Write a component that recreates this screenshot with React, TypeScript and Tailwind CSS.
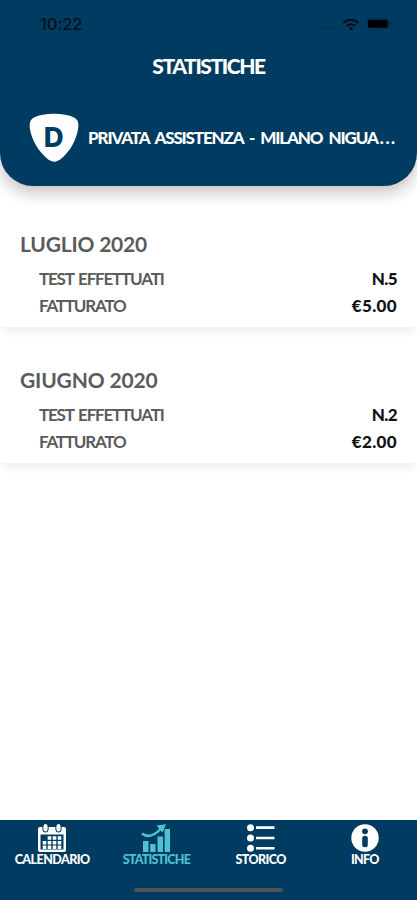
import type { ReactNode } from "react";

const months = [
  {
    label: "LUGLIO 2020",
    labelClass: "tracking-[-0.2px]",
    tests: "N.5",
    testsClass: "tracking-[-0.6px]",
    revenue: "€5.00",
  },
  {
    label: "GIUGNO 2020",
    labelClass: "tracking-[-0.15px]",
    tests: "N.2",
    testsClass: "tracking-[-0.6px]",
    revenue: "€2.00",
  },
];

function StatusBar() {
  return (
    <div className="flex h-12 items-center justify-between pr-[25px] pl-10 text-[#031019]">
      <span className="font-['Inter',sans-serif] text-[16.5px] leading-none font-medium tracking-[-0.1px]">
        10:22
      </span>
      <div className="flex items-center">
        <span className="mt-2 mr-[6px] h-px w-5 bg-[#00304f]" />
        <svg width="18" height="13" viewBox="0 0 18 13" fill="none" stroke="currentColor">
          <path d="M1.5 5a10.6 10.6 0 0 1 15 0" strokeWidth="2.4" />
          <path d="M4.5 8a6.4 6.4 0 0 1 9 0" strokeWidth="2" />
          <path d="M9 12.5 6.8 10.2a3.2 3.2 0 0 1 4.4 0Z" fill="currentColor" stroke="none" />
        </svg>
        <svg className="ml-1.5" width="26" height="12" viewBox="0 0 26 12" fill="none">
          <rect x="0.8" y="0.5" width="22" height="10.5" rx="3" stroke="#00314f" />
          <rect x="2" y="1.8" width="19.6" height="8" rx="1.5" fill="#000" />
          <path d="M24 4v4" stroke="#00263f" strokeWidth="1.2" />
        </svg>
      </div>
    </div>
  );
}

function Shield() {
  return (
    <svg className="shrink-0" width="50" height="50" viewBox="0 0 50 50">
      <path
        d="M25 .8C33 .8 40 2 45 4.6C48.8 6.6 49.8 10 49.2 15C47.6 27 41 38.5 31.500 46.300C27 49.600 23.500 49.600 19 46.300C9.500 38.500 2.400 27 .8 15C.200 10 1.400 6.600 5 4.600C10 2 17 .8 25 .8Z"
        fill="#fff"
      />
      <text
        x="14.8"
        y="34"
        className="fill-[#003c61] font-['Inter',sans-serif] text-[27.5px] font-extrabold"
      >
        D
      </text>
    </svg>
  );
}

function Row({ label, value, valueClass }: { label: string; value: string; valueClass?: string }) {
  return (
    <div className="flex h-[27px] items-center justify-between pr-5 pl-[39px] text-[17px] font-bold">
      <span className="tracking-[-1.2px] [word-spacing:2px]">{label}</span>
      <span className={`font-black text-[#111] ${valueClass ?? "tracking-[0.35px]"}`}>{value}</span>
    </div>
  );
}

function CalendarIcon() {
  return (
    <svg width="28" height="28" viewBox="0 0 28 28">
      <path
        fillRule="evenodd"
        d="M0 5a2 2 0 0 1 2-2h24a2 2 0 0 1 2 2v21a2 2 0 0 1-2 2H2a2 2 0 0 1-2-2ZM2.500 10.500v15h23v-15Z"
        fill="#fff"
      />
      <ellipse cx="7.500" cy="4" rx="3.2" ry="4.600" fill="#003c61" />
      <ellipse cx="20.500" cy="4" rx="3.2" ry="4.600" fill="#003c61" />
      <ellipse cx="7.500" cy="3.800" rx="2.2" ry="3.800" fill="#fff" />
      <ellipse cx="20.500" cy="3.800" rx="2.2" ry="3.800" fill="#fff" />
      <g stroke="#fff" strokeWidth="3.400" strokeDasharray="3.600 1.400">
        <path d="M9.700 14H23.300M4.700 18.8H23.300M4.700 23.3H23.300" />
      </g>
    </svg>
  );
}

function ChartIcon() {
  return (
    <svg width="30" height="28" viewBox="0 0 30 28" fill="#50c1ce">
      <path d="M2 17h5.500v11H2zM9.200 20h5.300v8H9.200zM16.500 12.500H22V28h-5.500zM23.600 5H29v23h-5.400z" />
      <path d="M.800 9.500C8 15 14.500 10.500 20 4.500" fill="none" stroke="#50c1ce" strokeWidth="2.500" />
      <path d="m15.500 1.500 9.500-1.200-3.500 8.500Z" />
    </svg>
  );
}

function ListIcon() {
  return (
    <svg width="28" height="28" viewBox="0 0 28 28" fill="#fff">
      <circle cx="3.500" cy="3.700" r="3.500" />
      <circle cx="3.500" cy="14" r="3.500" />
      <circle cx="3.500" cy="24.300" r="3.500" />
      <path d="M9 2.300h18.500v2.600H9zM9 12.700h18.500v2.600H9zM9 23h18.500v2.600H9z" />
    </svg>
  );
}

function InfoIcon() {
  return (
    <svg width="28" height="28" viewBox="0 0 28 28">
      <circle cx="14" cy="14" r="13.700" fill="#fff" />
      <circle cx="14" cy="7.300" r="2.900" fill="#003c61" />
      <rect x="11.200" y="11.700" width="5.600" height="11.500" rx="2.500" fill="#003c61" />
    </svg>
  );
}

function Tab({ icon, className, children }: { icon: ReactNode; className: string; children: string }) {
  return (
    <div className={`flex flex-1 flex-col items-center text-[12.5px] leading-3 font-black ${className}`}>
      {icon}
      <span className="mt-0.5 whitespace-nowrap">{children}</span>
    </div>
  );
}

export default function App() {
  return (
    <div className="flex h-[900px] w-full flex-col overflow-hidden bg-white font-['Lato',sans-serif] text-[#5b5b5b]">
      <header className="relative h-[185.500px] shrink-0 rounded-b-[33px] bg-[#003c61] text-white shadow-[0_7px_15px_rgba(40,20,20,0.25)]">
        <StatusBar />
        <h1 className="flex h-9 items-center justify-center text-[21px] font-black tracking-[-1.4px]">
          STATISTICHE
        </h1>
        <div className="mt-[29px] flex items-center gap-[9px] pl-[29px]">
          <Shield />
          <p className="text-[17px] font-black tracking-[-1.15px] whitespace-nowrap [word-spacing:3.2px]">
            PRIVATA ASSISTENZA - MILANO NIGUA<span className="ml-0.5 tracking-[1.6px]">...</span>
          </p>
        </div>
      </header>

      <main className="flex flex-1 flex-col gap-5 pt-[25.500px]">
        {months.map((month) => (
          <section
            key={month.label}
            className="h-[116px] bg-white pt-[17px] shadow-[0_7px_8px_-3px_rgba(0,0,0,0.08)]"
          >
            <h2 className={`flex h-8 items-center pl-5 text-[21px] font-bold ${month.labelClass}`}>
              {month.label}
            </h2>
            <div className="pt-[5px]">
              <Row label="TEST EFFETTUATI" value={month.tests} valueClass={month.testsClass} />
              <Row label="FATTURATO" value={month.revenue} />
            </div>
          </section>
        ))}
      </main>

      <nav className="flex h-20 shrink-0 flex-col justify-between bg-[#003c61] pt-1 pb-2 text-white">
        <div className="flex">
          <Tab icon={<CalendarIcon />} className="tracking-[-0.55px]">CALENDARIO</Tab>
          <Tab icon={<ChartIcon />} className="tracking-[-0.8px] text-[#50c1ce]">STATISTICHE</Tab>
          <Tab icon={<ListIcon />} className="tracking-[-0.6px]">STORICO</Tab>
          <Tab icon={<InfoIcon />} className="tracking-[-0.7px]">INFO</Tab>
        </div>
        <div className="h-1 w-[149px] self-center rounded-full bg-[#505357]" />
      </nav>
    </div>
  );
}
